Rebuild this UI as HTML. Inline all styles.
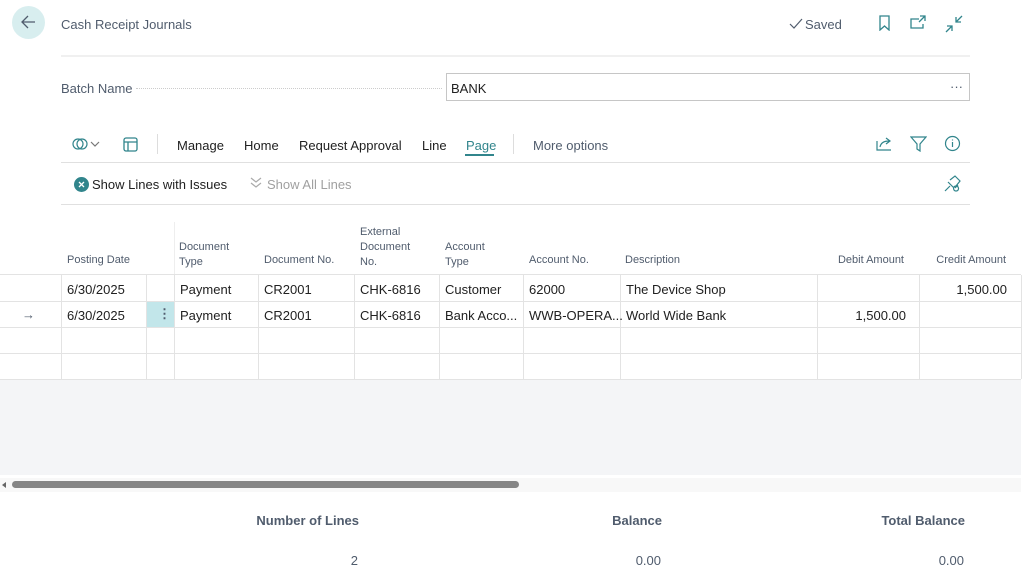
<!DOCTYPE html>
<html><head><meta charset="utf-8"><style>
*{box-sizing:border-box;margin:0;padding:0}
body{width:1024px;height:579px;overflow:hidden;background:#fff;font-family:"Liberation Sans",sans-serif;color:#212121;position:relative;font-size:13px}
.a{position:absolute;white-space:nowrap}
.hd{color:#505c6d;font-size:11px;line-height:15px}
.vl{position:absolute;width:1px;background:#e3e3e3;top:275px;height:104px}
.hl{position:absolute;height:1px;background:#e3e3e3;left:0;width:1021px}
.r{text-align:right}
</style></head><body>
<div class="a" style="left:12px;top:6px;width:33px;height:33px;border-radius:50%;background:#d8eeef"></div>
<svg class="a" style="left:19px;top:14px" width="18" height="16"><path d="M16 8H3M9 2L3 8l6 6" stroke="#505c6d" stroke-width="1.3" fill="none"/></svg>
<div class="a" style="left:61px;top:17px;color:#505c6d;font-size:13px">Cash Receipt Journals</div>
<svg class="a" style="left:789px;top:18px" width="14" height="12"><path d="M1 6l4 4 8-9" stroke="#505c6d" stroke-width="1.2" fill="none"/></svg>
<div class="a" style="left:805px;top:17px;color:#505c6d;font-size:13px">Saved</div>
<svg class="a" style="left:878px;top:15px" width="14" height="16" stroke="#31858c" fill="none" stroke-width="1.3"><path d="M2 1h9v14l-4.5-4L2 15z"/></svg>
<svg class="a" style="left:909px;top:15px" width="18" height="16" stroke="#31858c" fill="none" stroke-width="1.3"><path d="M10 4H2v9h12V9M11 1h5v5M16 1l-6 6"/></svg>
<svg class="a" style="left:945px;top:15px" width="18" height="18" stroke="#31858c" fill="none" stroke-width="1.3"><path d="M1 17l6-6M2 11h5v5M17 1l-6 6M11 2v5h5"/></svg>
<div class="a" style="left:61px;top:55px;width:909px;height:2px;background:#f0f0f0"></div>
<div class="a" style="left:61px;top:81px;color:#505c6d">Batch Name</div>
<div class="a" style="left:136px;top:88px;width:306px;border-top:1px dotted #ccc"></div>
<div class="a" style="left:446px;top:73px;width:524px;height:28px;border:1px solid #c6c6c6"></div>
<div class="a" style="left:451px;top:81px">BANK</div>
<div class="a" style="left:950px;top:79px;color:#505c6d">···</div>
<svg class="a" style="left:72px;top:137px" width="32" height="14" stroke="#31858c" fill="none" stroke-width="1.2"><circle cx="6" cy="7" r="5"/><circle cx="10" cy="7" r="5"/><path d="M19 5l4 4 4-4" stroke="#777"/></svg>
<svg class="a" style="left:123px;top:137px" width="15" height="15" stroke="#31858c" fill="none" stroke-width="1.3"><rect x="1" y="1" width="13" height="13" rx="2"/><path d="M1 5h13M5 5v9"/></svg>
<div class="a" style="left:157px;top:134px;width:1px;height:20px;background:#ddd"></div>
<div class="a" style="left:177px;top:138px">Manage</div>
<div class="a" style="left:244px;top:138px">Home</div>
<div class="a" style="left:299px;top:138px">Request Approval</div>
<div class="a" style="left:422px;top:138px">Line</div>
<div class="a" style="left:466px;top:138px;color:#31858c">Page</div>
<div class="a" style="left:465px;top:154px;width:29px;height:2px;background:#31858c"></div>
<div class="a" style="left:513px;top:134px;width:1px;height:20px;background:#ddd"></div>
<div class="a" style="left:533px;top:138px;color:#505c6d">More options</div>
<svg class="a" style="left:876px;top:136px" width="17" height="15" stroke="#31858c" fill="none" stroke-width="1.2"><path d="M1 5v9h14M4 11c1-5 5-6 9-6M10 2l4 3-4 3"/></svg>
<svg class="a" style="left:910px;top:136px" width="17" height="16" stroke="#31858c" fill="none" stroke-width="1.2"><path d="M1 1h15l-6 7v7l-3-2V8z"/></svg>
<svg class="a" style="left:944px;top:135px" width="17" height="17" stroke="#31858c" fill="none" stroke-width="1.2"><circle cx="8.5" cy="8.5" r="7"/><path d="M8.5 7v5M8.5 4.5v1"/></svg>
<div class="a" style="left:61px;top:162px;width:909px;height:1px;background:#e0e0e0"></div>
<svg class="a" style="left:74px;top:177px" width="15" height="15"><circle cx="7.5" cy="7.5" r="7.5" fill="#31858c"/><path d="M5 5l5 5M10 5l-5 5" stroke="#fff" stroke-width="1.3"/></svg>
<div class="a" style="left:92px;top:177px">Show Lines with Issues</div>
<svg class="a" style="left:249px;top:177px" width="14" height="12" stroke="#aaa" fill="none" stroke-width="1.2"><path d="M2 1l5 4 5-4M2 6l5 4 5-4"/></svg>
<div class="a" style="left:267px;top:177px;color:#a0a0a0">Show All Lines</div>
<svg class="a" style="left:944px;top:174px" width="18" height="18" stroke="#31858c" fill="none" stroke-width="1.2"><path d="M1 17l5-5M4 8l6 6M6 6l5-4 5 5-4 5M12 12a2.5 2.5 0 1 0 .1 0M11 14l3-3"/></svg>
<div class="a" style="left:61px;top:204px;width:909px;height:1px;background:#e0e0e0"></div>
<div class="a hd" style="left:67px;top:253px">Posting Date</div>
<div class="a hd" style="left:179px;top:240px">Document<br>Type</div>
<div class="a hd" style="left:264px;top:253px">Document No.</div>
<div class="a hd" style="left:360px;top:225px">External<br>Document<br>No.</div>
<div class="a hd" style="left:445px;top:240px">Account<br>Type</div>
<div class="a hd" style="left:529px;top:253px">Account No.</div>
<div class="a hd" style="left:625px;top:253px">Description</div>
<div class="a hd r" style="left:817px;top:253px;width:87px">Debit Amount</div>
<div class="a hd r" style="left:919px;top:253px;width:87px">Credit Amount</div>
<div class="a" style="left:174px;top:222px;width:1px;height:53px;background:#eee"></div>
<div class="hl" style="top:274px"></div>
<div class="hl" style="top:301px"></div>
<div class="hl" style="top:327px"></div>
<div class="hl" style="top:353px"></div>
<div class="hl" style="top:379px"></div>
<div class="vl" style="left:61px"></div><div class="vl" style="left:146px"></div><div class="vl" style="left:174px"></div><div class="vl" style="left:258px"></div><div class="vl" style="left:354px"></div><div class="vl" style="left:439px"></div><div class="vl" style="left:523px"></div><div class="vl" style="left:620px"></div><div class="vl" style="left:817px"></div><div class="vl" style="left:919px"></div><div class="vl" style="left:1021px"></div>
<div class="a" style="left:147px;top:302px;width:27px;height:25px;background:#c2e6ea"></div>
<div class="a" style="left:158px;top:306px;color:#505c6d;font-weight:bold">⋮</div>
<div class="a" style="left:22px;top:307px;color:#505c6d">→</div>
<div class="a" style="left:67px;top:282px">6/30/2025</div><div class="a" style="left:180px;top:282px">Payment</div><div class="a" style="left:264px;top:282px">CR2001</div><div class="a" style="left:360px;top:282px">CHK-6816</div><div class="a" style="left:445px;top:282px">Customer</div><div class="a" style="left:529px;top:282px">62000</div><div class="a" style="left:626px;top:282px">The Device Shop</div><div class="a r" style="left:919px;top:282px;width:88px">1,500.00</div>
<div class="a" style="left:67px;top:308px">6/30/2025</div><div class="a" style="left:180px;top:308px">Payment</div><div class="a" style="left:264px;top:308px">CR2001</div><div class="a" style="left:360px;top:308px">CHK-6816</div><div class="a" style="left:445px;top:308px">Bank Acco...</div><div class="a" style="left:529px;top:308px">WWB-OPERA...</div><div class="a" style="left:626px;top:308px">World Wide Bank</div><div class="a r" style="left:817px;top:308px;width:89px">1,500.00</div>
<div class="a" style="left:0;top:380px;width:1021px;height:95px;background:#f4f5f7"></div>
<div class="a" style="left:0;top:478px;width:1021px;height:14px;background:#f8f8f8"></div>
<div class="a" style="left:2px;top:482px;width:0;height:0;border-top:3px solid transparent;border-bottom:3px solid transparent;border-right:4px solid #666"></div>
<div class="a" style="left:12px;top:481px;width:507px;height:7px;border-radius:4px;background:#868686"></div>
<div class="a r" style="left:159px;width:200px;top:513px;color:#505c6d;font-weight:bold">Number of Lines</div>
<div class="a r" style="left:462px;width:200px;top:513px;color:#505c6d;font-weight:bold">Balance</div>
<div class="a r" style="left:765px;width:200px;top:513px;color:#505c6d;font-weight:bold">Total Balance</div>
<div class="a r" style="left:158px;width:200px;top:553px;color:#505c6d">2</div>
<div class="a r" style="left:461px;width:200px;top:553px;color:#505c6d">0.00</div>
<div class="a r" style="left:764px;width:200px;top:553px;color:#505c6d">0.00</div>
</body></html>
